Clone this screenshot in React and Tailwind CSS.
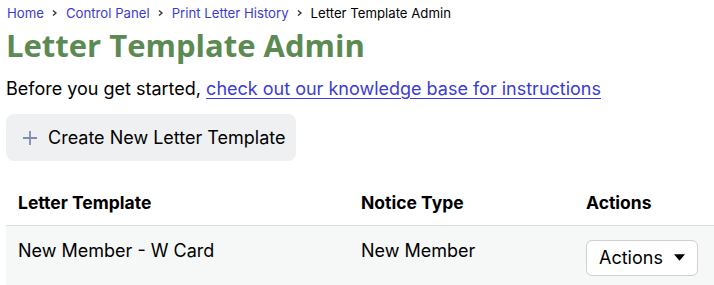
import React from 'react'

const crumbs = ['Home', 'Control Panel', 'Print Letter History']

const Chevron = () => (
  <svg viewBox="0 0 8 8" className="w-[8px] h-[8px] mx-[7px] fill-current text-[#333]">
    <path d="M2.5 1 L6 4 L2.5 7 L1.5 6 L4 4 L1.5 2 Z" />
  </svg>
)

const App = () => {
  return (
    <div className="px-[6px] pt-[4px] font-['Inter',sans-serif] text-black bg-white min-h-[285px] overflow-hidden">
      {/* breadcrumb */}
      <nav className="flex items-center text-[13.2px] leading-[18px] ml-[1px]">
        {crumbs.map((c) => (
          <React.Fragment key={c}>
            <a href="#" className="text-[#3b3bd6]">{c}</a>
            <Chevron />
          </React.Fragment>
        ))}
        <span>Letter Template Admin</span>
      </nav>
      <h1 className="mt-[2px] font-['Open_Sans',sans-serif] font-bold text-[31px] leading-[42px] text-[#5b8a52]">
        Letter Template Admin
      </h1>
      <p className="mt-[10px] text-[18px] leading-[26px]">
        Before you get started,{' '}
        <a href="#" className="text-[#3b3bd6] underline underline-offset-[3px]">
          check out our knowledge base for instructions
        </a>
      </p>
      <button className="mt-[12px] flex items-center whitespace-nowrap h-[47px] pl-[16px] pr-[10px] rounded-[8px] bg-[#eff0f2] text-[18px]">
        <svg viewBox="0 0 16 16" className="w-[16px] h-[16px] mr-[10px] stroke-[#7d8bb5]" strokeWidth="1.8">
          <path d="M8 1 V15 M1 8 H15" />
        </svg>
        Create New Letter Template
      </button>
      <table className="mt-[20px] w-[720px] text-left border-collapse">
        <thead>
          <tr className="border-b border-[#dcdcdc]">
            <th className="pl-[12px] py-0 h-[44px] text-[17.5px] font-bold w-[355px]">Letter Template</th>
            <th className="py-0 text-[17.5px] font-bold w-[225px]">Notice Type</th>
            <th className="py-0 text-[17.5px] font-bold">Actions</th>
          </tr>
        </thead>
        <tbody>
          <tr className="bg-[#f6f7f7] align-top">
            <td className="pl-[12px] pt-[13px] text-[18px] leading-[24px] h-[70px]">New Member - W Card</td>
            <td className="pt-[13px] text-[18px] leading-[24px]">New Member</td>
            <td className="pt-[14px]">
              <button className="flex items-center h-[36px] px-[12px] border border-[#d0d0d0] rounded-[6px] bg-white text-[18px]">
                Actions
                <svg viewBox="0 0 10 6" className="w-[11px] h-[7px] ml-[11px] fill-black">
                  <path d="M0 0 H10 L5 6 Z" />
                </svg>
              </button>
            </td>
          </tr>
        </tbody>
      </table>
    </div>
  )
}

export default App
